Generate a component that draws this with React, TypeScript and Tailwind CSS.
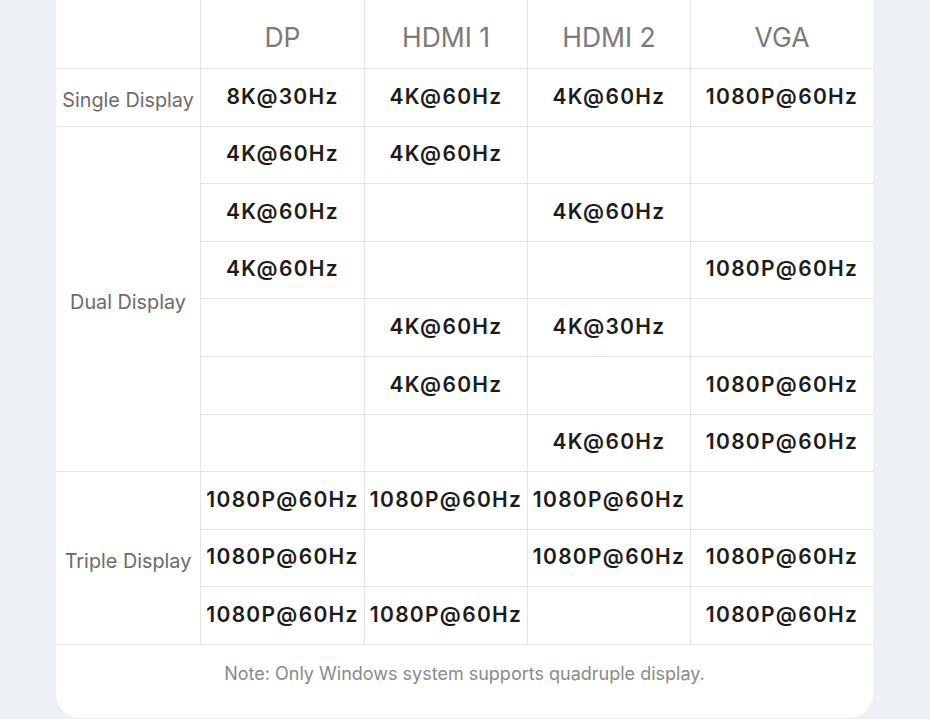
import React from 'react';

const cols = ['DP', 'HDMI 1', 'HDMI 2', 'VGA'];

type Group = { label: string; rows: string[][] };

const groups: Group[] = [
  { label: 'Single Display', rows: [['8K@30Hz', '4K@60Hz', '4K@60Hz', '1080P@60Hz']] },
  {
    label: 'Dual Display',
    rows: [
      ['4K@60Hz', '4K@60Hz', '', ''],
      ['4K@60Hz', '', '4K@60Hz', ''],
      ['4K@60Hz', '', '', '1080P@60Hz'],
      ['', '4K@60Hz', '4K@30Hz', ''],
      ['', '4K@60Hz', '', '1080P@60Hz'],
      ['', '', '4K@60Hz', '1080P@60Hz'],
    ],
  },
  {
    label: 'Triple Display',
    rows: [
      ['1080P@60Hz', '1080P@60Hz', '1080P@60Hz', ''],
      ['1080P@60Hz', '', '1080P@60Hz', '1080P@60Hz'],
      ['1080P@60Hz', '1080P@60Hz', '', '1080P@60Hz'],
    ],
  },
];

export default function App() {
  let rowStart = 2;
  return (
    <div className="min-h-screen bg-[#edf0f4] font-['Inter',sans-serif]">
      <div className="ml-[56px] w-[817px] h-[718px] bg-white rounded-b-[24px] overflow-hidden">
        <div className="grid grid-cols-[144px_163px_162px_162px_182px] grid-rows-[68px_repeat(10,56.6px)] gap-px bg-[#e4e4e4] border-b border-[#e4e4e4]">
          <div className="bg-white" />
          {cols.map((c) => (
            <div key={c} className="bg-white flex items-center justify-center pt-[8px] text-[26.5px] text-[#7a7a7a]">
              {c}
            </div>
          ))}
          {groups.map((g) => {
            const start = rowStart;
            rowStart += g.rows.length;
            return (
              <React.Fragment key={g.label}>
                <div
                  className="bg-white col-start-1 flex items-center justify-center pt-[7px] text-[19.8px] text-[#6b6b6b]"
                  style={{ gridRow: `${start} / span ${g.rows.length}` }}
                >
                  {g.label}
                </div>
                {g.rows.map((r, i) =>
                  r.map((v, j) => (
                    <div
                      key={`${g.label}-${i}-${j}`}
                      className="bg-white flex items-center justify-center pb-[2px] text-[21px] font-semibold text-[#1c1c1c] tracking-[1.3px]"
                      style={{ gridRow: start + i, gridColumn: j + 2 }}
                    >
                      {v}
                    </div>
                  ))
                )}
              </React.Fragment>
            );
          })}
        </div>
        <div className="h-[57px] flex items-center justify-center text-[18px] text-[#8a8a8a]">
          Note: Only Windows system supports quadruple display.
        </div>
      </div>
    </div>
  );
}
